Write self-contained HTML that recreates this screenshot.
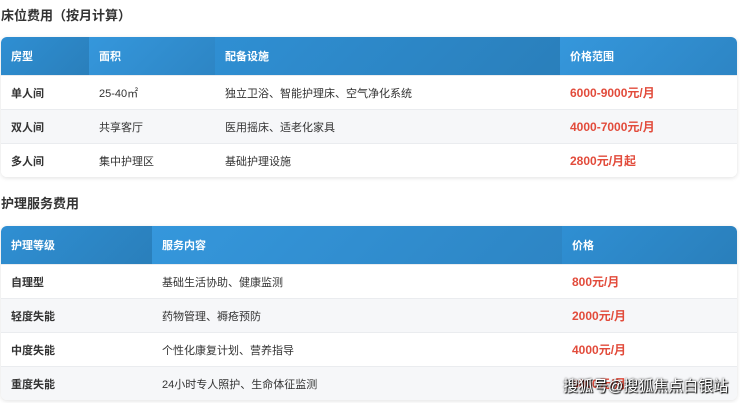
<!DOCTYPE html>
<html><head><meta charset="utf-8"><style>
body{margin:0;width:740px;height:403px;overflow:hidden;background:#fff;font-family:"Liberation Sans","Noto Sans CJK SC",sans-serif;position:relative}
h2{position:absolute;left:1px;margin:0;font-size:13px;font-weight:bold;color:#333}
table{position:absolute;left:1px;width:736px;border-collapse:collapse;border-radius:6px;overflow:hidden;box-shadow:0 1px 4px rgba(0,0,0,.12);font-size:11px;color:#333}
th{height:38px;text-align:left;padding:0 0 0 10px;color:#fff;font-weight:bold;font-size:11px;background:linear-gradient(135deg,#2f8fd3,#2a7fbb)}
th:nth-child(even){background:linear-gradient(135deg,#3597dc,#2d85c4)}
td{height:33px;padding:0 0 0 10px;border-top:1px solid #eaecef;background:#fff}
tbody tr:nth-child(even) td{background:#f6f7f9}
td:first-child{font-weight:bold}
.p{color:#e24b3b;font-weight:bold;font-size:12px}
.wm{position:absolute;left:563px;top:375px;font-size:15px;color:#fff;text-shadow:0 0 2px #000,1px 1px 1px #000}
</style></head><body>
<h2 style="top:5px">床位费用（按月计算）</h2>
<table style="top:37px">
<thead><tr><th style="width:78px">房型</th><th style="width:116px">面积</th><th style="width:335px">配备设施</th><th>价格范围</th></tr></thead>
<tbody>
<tr><td>单人间</td><td>25-40㎡</td><td>独立卫浴、智能护理床、空气净化系统</td><td class="p">6000-9000元/月</td></tr>
<tr><td>双人间</td><td>共享客厅</td><td>医用摇床、适老化家具</td><td class="p">4000-7000元/月</td></tr>
<tr><td>多人间</td><td>集中护理区</td><td>基础护理设施</td><td class="p">2800元/月起</td></tr>
</tbody></table>
<h2 style="top:193px">护理服务费用</h2>
<table style="top:226px">
<thead><tr><th style="width:141px">护理等级</th><th style="width:400px">服务内容</th><th>价格</th></tr></thead>
<tbody>
<tr><td>自理型</td><td>基础生活协助、健康监测</td><td class="p">800元/月</td></tr>
<tr><td>轻度失能</td><td>药物管理、褥疮预防</td><td class="p">2000元/月</td></tr>
<tr><td>中度失能</td><td>个性化康复计划、营养指导</td><td class="p">4000元/月</td></tr>
<tr><td>重度失能</td><td>24小时专人照护、生命体征监测</td><td class="p">6000元/月</td></tr>
</tbody></table>
<div class="wm">搜狐号@搜狐焦点白银站</div>
</body></html>
